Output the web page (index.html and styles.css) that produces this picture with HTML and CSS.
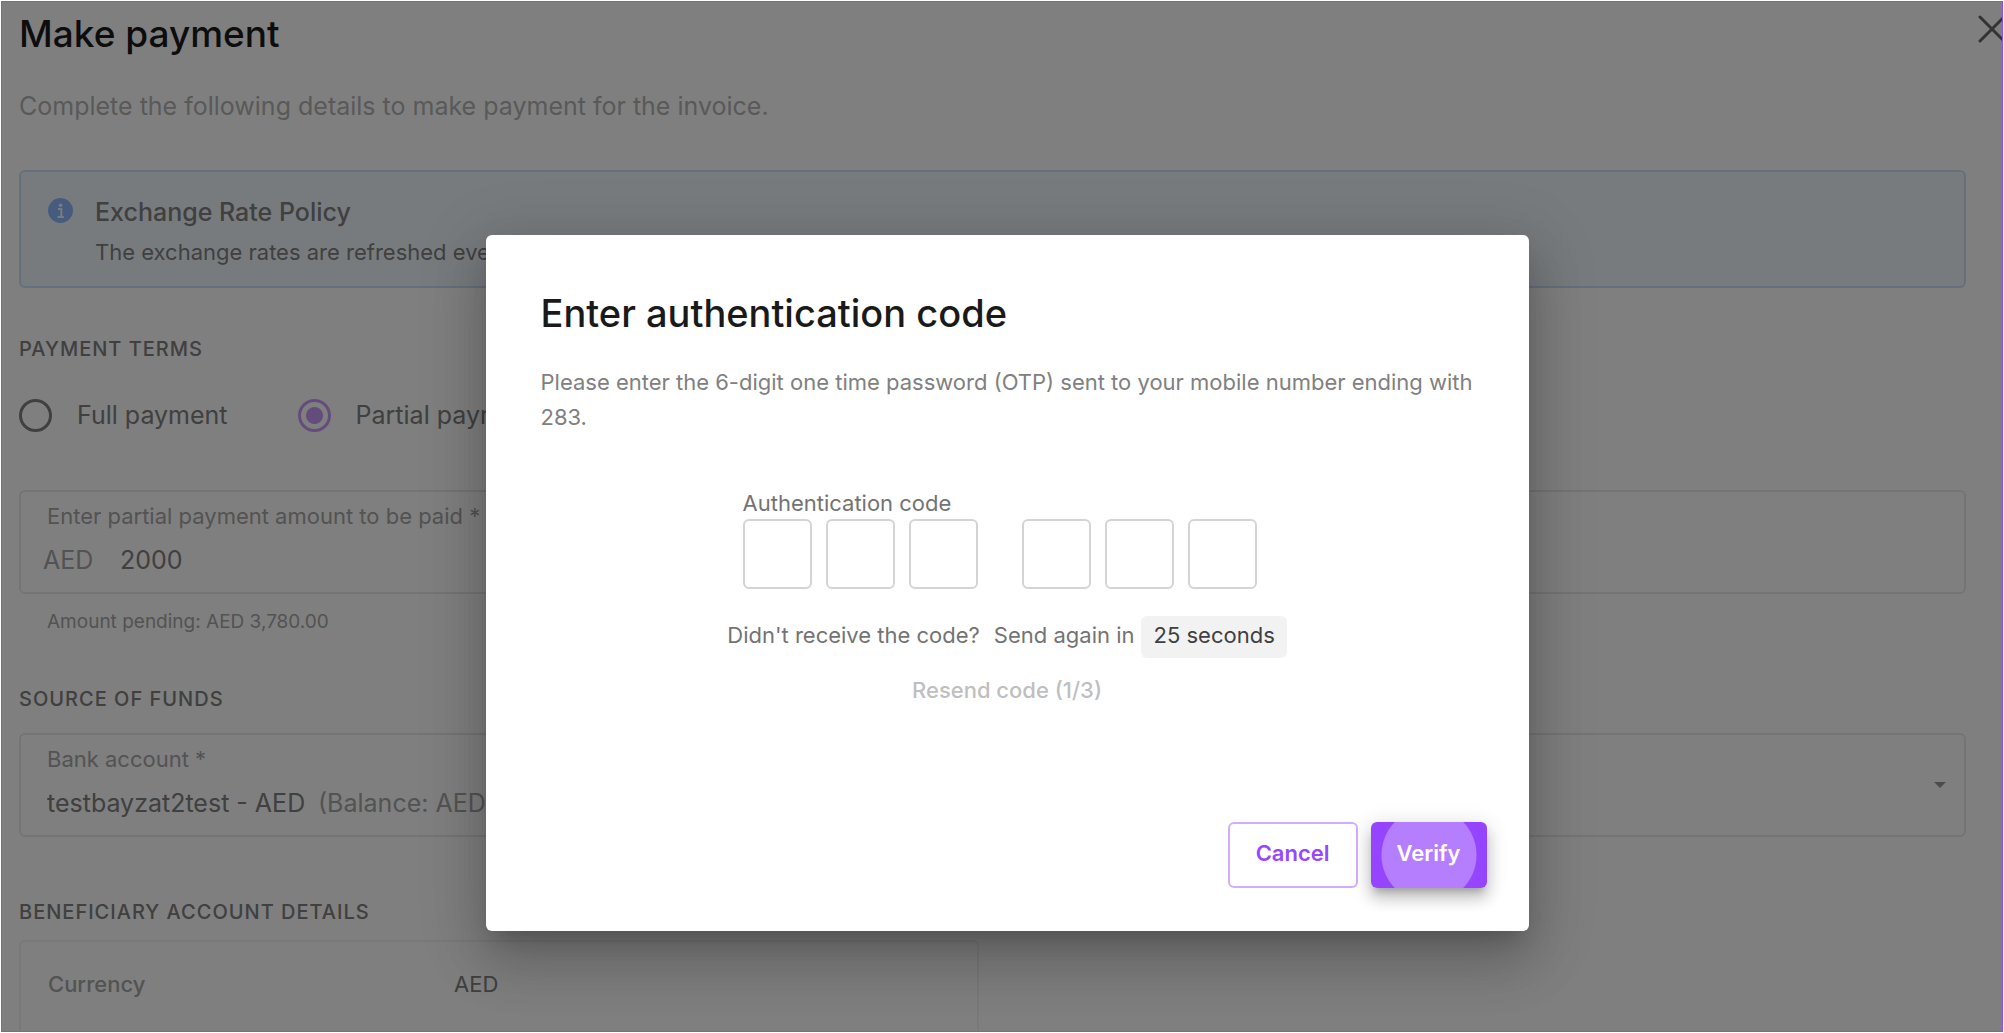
FILE: index.html
```html
<!DOCTYPE html>
<html lang="en">
<head>
  <meta charset="UTF-8">
  <meta name="viewport" content="width=device-width, initial-scale=1.0">
  <title>Make payment</title>
  <link rel="stylesheet" href="styles.css">
</head>
<body>
<div class="frame">

  <main class="page">
    <header class="page-header">
      <h1>Make payment</h1>
      <button class="close-btn" type="button" aria-label="Close">
        <svg width="28" height="28" viewBox="0 0 28 28" fill="none" stroke="currentColor" stroke-width="3" stroke-linecap="round">
          <path d="M2 2L26 26M26 2L2 26"/>
        </svg>
      </button>
    </header>
    <p class="subtitle">Complete the following details to make payment for the invoice.</p>

    <div class="info-box">
      <svg class="info-icon" width="25" height="25" viewBox="0 0 25 25">
        <circle cx="12.5" cy="12.5" r="12.5" fill="#8cb8ff"/>
        <circle cx="12.6" cy="7.2" r="1.8" fill="#f0f7ff"/>
        <path d="M10 11h3.3v7.6M9.6 19h6.2" fill="none" stroke="#f0f7ff" stroke-width="2"/>
      </svg>
      <div>
        <h2>Exchange Rate Policy</h2>
        <p>The exchange rates are refreshed every</p>
      </div>
    </div>

    <h3 class="section-title">Payment terms</h3>
    <div class="radio-row">
      <label class="radio"><input type="radio" name="terms" value="full"> Full payment</label>
      <label class="radio"><input type="radio" name="terms" value="partial" checked> Partial payment</label>
    </div>

    <div class="field">
      <label for="amount">Enter partial payment amount to be paid *</label>
      <div class="field-row amount-row">
        <span class="prefix">AED</span>
        <input type="text" id="amount" value="2000">
      </div>
    </div>
    <p class="helper">Amount pending: AED 3,780.00</p>

    <h3 class="section-title source-title">Source of funds</h3>
    <div class="field select-field">
      <div>
        <label for="account">Bank account *</label>
        <div class="field-row">
          <select id="account">
            <option>testbayzat2test - AED</option>
          </select>
          <span class="balance">(Balance: AED</span>
        </div>
      </div>
      <svg class="caret" width="12" height="6" viewBox="0 0 12 6"><path d="M0 0h12L6 6z" fill="currentColor"/></svg>
    </div>

    <h3 class="section-title beneficiary-title">Beneficiary account details</h3>
    <dl class="details">
      <dt>Currency</dt>
      <dd>AED</dd>
    </dl>
  </main>

  <div class="overlay">
    <form class="modal" role="dialog" aria-labelledby="modalTitle">
      <div class="modal-body">
        <h2 id="modalTitle">Enter authentication code</h2>
        <p class="modal-text">Please enter the 6-digit one time password (OTP) sent to your mobile number ending with 283.</p>

        <div class="otp">
          <label for="otp1">Authentication code</label>
          <div class="otp-inputs">
            <div class="otp-group">
              <input type="text" id="otp1" maxlength="1" inputmode="numeric">
              <input type="text" maxlength="1" inputmode="numeric" aria-label="Digit 2">
              <input type="text" maxlength="1" inputmode="numeric" aria-label="Digit 3">
            </div>
            <div class="otp-group">
              <input type="text" maxlength="1" inputmode="numeric" aria-label="Digit 4">
              <input type="text" maxlength="1" inputmode="numeric" aria-label="Digit 5">
              <input type="text" maxlength="1" inputmode="numeric" aria-label="Digit 6">
            </div>
          </div>
        </div>

        <div class="resend-row">
          <span>Didn't receive the code?</span>
          <span class="countdown">Send again in <span class="chip">25 seconds</span></span>
        </div>
        <button class="resend-btn" type="button" disabled>Resend code (1/3)</button>
      </div>

      <div class="modal-actions">
        <button class="btn btn-cancel" type="button">Cancel</button>
        <button class="btn btn-verify" type="submit">Verify</button>
      </div>
    </form>
  </div>

</div>
</body>
</html>
```
FILE: styles.css
```css
* {
  box-sizing: border-box;
}
body {
  margin: 0;
  padding: 1px;
  background: #fff;
  font-family: Inter, "Open Sans", sans-serif;
  font-size: 22px;
  line-height: 28px;
  color: #808080;
}
h1, h2, h3, p, dl, dd {
  margin: 0;
  font-weight: 500;
}
p, dd {
  font-weight: 400;
}
input, select, button {
  font-family: inherit;
  font-size: inherit;
  line-height: inherit;
  color: inherit;
}
.frame {
  position: relative;
  height: calc(100vh - 2px);
  border: 1px solid #9747ff;
  overflow: hidden;
}

/* page behind the dialog */
.page {
  padding: 10px 36px 0 17px;
}
.page-header {
  display: flex;
  justify-content: space-between;
  align-items: flex-start;
}
.page-header h1 {
  font-size: 37px;
  line-height: 44px;
  color: #1a1a1a;
}
.close-btn {
  flex: none;
  margin: 3px -40px 0 0;
  padding: 0;
  border: none;
  background: none;
  line-height: 0;
  color: #666;
  cursor: pointer;
}
.subtitle {
  margin-top: 34px;
  font-size: 25px;
  line-height: 32px;
  color: #b3b3b3;
}
.info-box {
  display: flex;
  gap: 22px;
  margin-top: 48px;
  padding: 25px 27px 20px;
  border: 2px solid #ccdffa;
  border-radius: 6px;
  background: #f0f7fd;
}
.info-icon {
  flex: none;
  margin-top: 1px;
}
.info-box h2 {
  font-size: 25px;
  line-height: 30px;
  color: #808080;
}
.info-box p {
  margin-top: 11px;
}
.section-title {
  margin-top: 49px;
  font-size: 20px;
  line-height: 24px;
  letter-spacing: 1px;
  text-transform: uppercase;
  color: #808080;
}
.radio-row {
  display: flex;
  gap: 70px;
  margin-top: 38px;
  font-size: 25px;
}
.radio {
  display: flex;
  align-items: center;
  gap: 25px;
  line-height: 33px;
}
.radio input {
  appearance: none;
  flex: none;
  width: 33px;
  height: 33px;
  margin: 0;
  border: 3px solid #808080;
  border-radius: 50%;
}
.radio input:checked {
  border-color: #c99bfa;
  background: radial-gradient(circle, #c99bfa 8px, transparent 9px);
}
.field {
  height: 104px;
  padding: 10px 18px 0 26px;
  border: 2px solid #e8e8e8;
  border-radius: 6px;
}
.radio-row + .field {
  margin-top: 58px;
}
.field label {
  display: block;
  color: #a6a6a6;
}
.field-row {
  display: flex;
  align-items: center;
  margin-top: 14px;
  font-size: 25px;
  line-height: 32px;
}
.amount-row {
  margin-left: -4px;
}
.prefix {
  width: 77px;
  color: #a6a6a6;
}
.field input, .field select {
  appearance: none;
  height: 32px;
  margin: 0;
  padding: 0;
  border: none;
  background: none;
}
.field input {
  flex: 1;
}
.select-field {
  display: flex;
  justify-content: space-between;
}
.balance {
  margin-left: 12px;
  color: #a6a6a6;
}
.caret {
  margin-top: 37px;
  color: #999;
}
.helper {
  margin: 14px 0 0 28px;
  font-size: 19px;
  color: #a6a6a6;
}
.source-title {
  margin-top: 51px;
}
.source-title + .field {
  margin-top: 22px;
}
.beneficiary-title {
  margin-top: 63px;
}
.details {
  display: grid;
  grid-template-columns: 406px 1fr;
  width: calc(50% - 14px);
  height: 140px;
  margin-top: 16px;
  padding: 28px 27px;
  border: 2px solid #f2f2f2;
  border-radius: 6px;
  color: #a6a6a6;
}
.details dd {
  color: #808080;
}

/* dialog */
.overlay {
  position: absolute;
  inset: 0;
  padding: 233px 0 0 10px;
  background: rgba(0, 0, 0, 0.5);
}
.modal {
  width: 1043px;
  max-width: 90%;
  margin: 0 auto;
  padding: 55px 0 43px;
  border-radius: 6px;
  background: #fff;
  box-shadow: 0 15px 21px -10px rgba(0, 0, 0, 0.2), 0 33px 53px 4px rgba(0, 0, 0, 0.14), 0 12px 64px 11px rgba(0, 0, 0, 0.12);
}
.modal-body {
  display: flex;
  flex-direction: column;
  align-items: center;
  padding: 0 55px;
}
.modal-body h2 {
  align-self: flex-start;
  font-size: 38px;
  line-height: 46px;
  color: #1a1a1a;
}
.modal-text {
  align-self: flex-start;
  margin-top: 29px;
  line-height: 35px;
}
.otp {
  margin-top: 54px;
  padding-right: 15px;
}
.otp label {
  display: block;
  color: #737373;
}
.otp-inputs {
  display: flex;
  gap: 44px;
  margin-top: 2px;
}
.otp-group {
  display: flex;
  gap: 14px;
}
.otp-group input {
  width: 69px;
  height: 70px;
  margin: 0;
  padding: 0;
  border: 2px solid #d4d4d4;
  border-radius: 6px;
  text-align: center;
}
.resend-row {
  display: flex;
  align-items: baseline;
  gap: 14px;
  margin-top: 27px;
  color: #737373;
}
.countdown {
  display: flex;
  align-items: baseline;
  gap: 7px;
}
.chip {
  padding: 5px 12px 9px;
  border-radius: 6px;
  background: #f2f2f2;
  color: #404040;
}
.resend-btn {
  margin-top: 18px;
  padding: 0;
  border: none;
  background: none;
  font-weight: 500;
  color: #bfbfbf;
}
.modal-actions {
  display: flex;
  justify-content: flex-end;
  gap: 13px;
  margin-top: 118px;
  padding: 0 42px;
}
.btn {
  height: 66px;
  padding: 0 26px 5px;
  border: 2px solid #d2adff;
  border-radius: 6px;
  background: #fff;
  font-weight: 600;
  color: #9747ff;
  cursor: pointer;
}
.btn-verify {
  border: none;
  background: radial-gradient(circle, #b57eff 47px, #9545ff 48px);
  color: #fff;
  box-shadow: 0 7px 7px -4px rgba(0, 0, 0, 0.2), 0 11px 14px 1px rgba(0, 0, 0, 0.14), 0 4px 20px 3px rgba(0, 0, 0, 0.12);
}
```
